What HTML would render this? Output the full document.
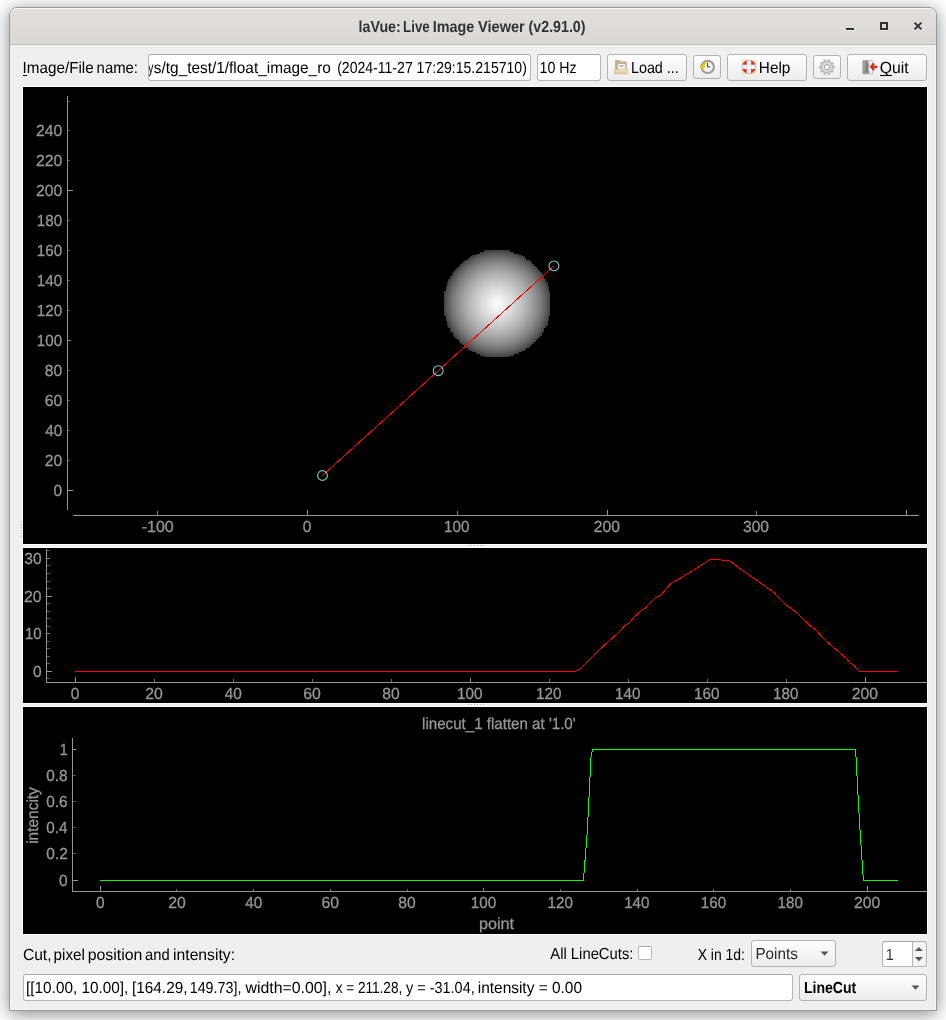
<!DOCTYPE html>
<html lang="en"><head><meta charset="utf-8"><title>laVue: Live Image Viewer (v2.91.0)</title>
<style>
html,body{margin:0;padding:0}
body{width:946px;height:1020px;position:relative;overflow:hidden;background:#fff}
#root{position:absolute;left:0;top:0;width:946px;height:1020px;will-change:transform;overflow:hidden;background:#fff;font-family:"Liberation Sans",sans-serif}
#root *{box-sizing:border-box}
#root>div,#root>svg{position:absolute}
#win{left:9px;top:7px;width:928px;height:1004px;border:1px solid #999;border-radius:8px 8px 0 0;background:#efefef;box-shadow:0 3px 18px rgba(0,0,0,.47),inset 0 0 0 1px #f4f4f4}
#tb{left:10px;top:8px;width:926px;height:37px;border-radius:7px 7px 0 0;background:linear-gradient(#e3dfdc,#dbd7d3);border-top:1px solid #f9f9f8;border-bottom:1px solid #c3bdb7}
.pl{background:#000;border:1px solid #fff;border-radius:1px}
.sp{background:#fff}
.in{background:#fff;border:1px solid #b6b6b6;border-top-color:#a8a8a8;border-radius:3px}
.bt{border:1px solid #b2b2b2;border-radius:3px;background:linear-gradient(#fefefe,#ececec)}
#ov{left:0;top:0;font-family:"Liberation Sans",sans-serif;text-rendering:geometricPrecision}
</style></head>
<body><div id="root">
<div id="win"></div><div id="tb"></div>
<div class="pl" style="left:22px;top:86px;width:906px;height:459px;"></div>
<div class="pl" style="left:22px;top:547px;width:906px;height:157px;"></div>
<div class="pl" style="left:22px;top:706px;width:906px;height:229px;"></div>
<div class="in" style="left:148px;top:54px;width:383px;height:27px;"></div>
<div class="in" style="left:537px;top:54px;width:64px;height:27px;"></div>
<div class="bt" style="left:607px;top:54px;width:80px;height:27px;"></div>
<div class="bt" style="left:693px;top:55px;width:28px;height:24px;"></div>
<div class="bt" style="left:727px;top:54px;width:80px;height:27px;"></div>
<div class="bt" style="left:813px;top:55px;width:28px;height:24px;"></div>
<div class="bt" style="left:847px;top:54px;width:80px;height:27px;"></div>
<div class="in" style="left:638px;top:946px;width:14px;height:14px;border-radius:2px"></div>
<div class="bt" style="left:751px;top:940px;width:85px;height:27px;"></div>
<div class="in" style="left:882px;top:941px;width:45px;height:26px;background:linear-gradient(90deg,#fff 30px,#f4f4f4 30px)"></div>
<div class="in" style="left:23px;top:974px;width:770px;height:27px;"></div>
<div class="bt" style="left:799px;top:974px;width:128px;height:27px;"></div>
<svg id="ov" width="946" height="1020" viewBox="0 0 946 1020">
<rect x="468" y="545" width="1" height="1" fill="#b4b4b4"/><rect x="469" y="546" width="1" height="1" fill="#fbfbfb"/>
<rect x="468" y="704" width="1" height="1" fill="#b4b4b4"/><rect x="469" y="705" width="1" height="1" fill="#fbfbfb"/>
<rect x="471" y="545" width="1" height="1" fill="#b4b4b4"/><rect x="472" y="546" width="1" height="1" fill="#fbfbfb"/>
<rect x="471" y="704" width="1" height="1" fill="#b4b4b4"/><rect x="472" y="705" width="1" height="1" fill="#fbfbfb"/>
<rect x="474" y="545" width="1" height="1" fill="#b4b4b4"/><rect x="475" y="546" width="1" height="1" fill="#fbfbfb"/>
<rect x="474" y="704" width="1" height="1" fill="#b4b4b4"/><rect x="475" y="705" width="1" height="1" fill="#fbfbfb"/>
<rect x="477" y="545" width="1" height="1" fill="#b4b4b4"/><rect x="478" y="546" width="1" height="1" fill="#fbfbfb"/>
<rect x="477" y="704" width="1" height="1" fill="#b4b4b4"/><rect x="478" y="705" width="1" height="1" fill="#fbfbfb"/>
<rect x="480" y="545" width="1" height="1" fill="#b4b4b4"/><rect x="481" y="546" width="1" height="1" fill="#fbfbfb"/>
<rect x="480" y="704" width="1" height="1" fill="#b4b4b4"/><rect x="481" y="705" width="1" height="1" fill="#fbfbfb"/>
<rect x="483" y="545" width="1" height="1" fill="#b4b4b4"/><rect x="484" y="546" width="1" height="1" fill="#fbfbfb"/>
<rect x="483" y="704" width="1" height="1" fill="#b4b4b4"/><rect x="484" y="705" width="1" height="1" fill="#fbfbfb"/>
<rect x="21" y="521" width="1" height="1" fill="#b4b4b4"/>
<rect x="21" y="524" width="1" height="1" fill="#b4b4b4"/>
<rect x="21" y="527" width="1" height="1" fill="#b4b4b4"/>
<rect x="21" y="530" width="1" height="1" fill="#b4b4b4"/>
<rect x="21" y="533" width="1" height="1" fill="#b4b4b4"/>
<rect x="21" y="536" width="1" height="1" fill="#b4b4b4"/>
<text y="32" font-size="16" font-weight="bold" fill="#2e3436" xml:space="preserve"><tspan x="358.62" textLength="46.03" lengthAdjust="spacingAndGlyphs">laVue: </tspan><tspan x="403.11" textLength="30.23" lengthAdjust="spacingAndGlyphs">Live </tspan><tspan x="432.74" textLength="45.55" lengthAdjust="spacingAndGlyphs">Image </tspan><tspan x="478.00" textLength="50.85" lengthAdjust="spacingAndGlyphs">Viewer </tspan><tspan x="528.59" textLength="56.92" lengthAdjust="spacingAndGlyphs">(v2.91.0)</tspan></text>
<g fill="none" stroke="#fff" stroke-opacity="0.55"><path d="M846 30.500h8M881 30.500h6M914.5 30.500h1.800M919.700 30.500h1.800" stroke-width="1"/></g>
<rect x="846" y="28" width="8" height="2" fill="#2e3436"/><rect x="881" y="23" width="6" height="6" fill="none" stroke="#2e3436" stroke-width="2"/><path d="M914.6 22.6l6.8 6.8m0-6.8l-6.8 6.8" stroke="#2e3436" stroke-width="2" fill="none"/>
<text y="73" font-size="16" fill="#000" xml:space="preserve"><tspan x="22.59" textLength="75.31" lengthAdjust="spacingAndGlyphs">Image/File </tspan><tspan x="96.61" textLength="41.35" lengthAdjust="spacingAndGlyphs">name:</tspan></text>
<rect x="23" y="75" width="4" height="1" fill="#000"/>
<svg x="149" y="55" width="381" height="25" viewBox="149 55 381 25">
<text y="73" font-size="16" fill="#000" xml:space="preserve"><tspan x="147.97" textLength="5.45" lengthAdjust="spacingAndGlyphs">y</tspan><tspan x="153.87" textLength="185.52" lengthAdjust="spacingAndGlyphs">s/tg_test/1/float_image_ro  </tspan><tspan x="337.13" textLength="189.73" lengthAdjust="spacingAndGlyphs">(2024-11-27 17:29:15.215710)</tspan></text>
</svg>
<text transform="translate(539.52 73) scale(0.8899 1)" font-size="16" fill="#000" xml:space="preserve">10 Hz</text>
<text transform="translate(630.92 73) scale(0.8972 1)" font-size="16" fill="#000" xml:space="preserve">Load ...</text>
<text transform="translate(758.84 73) scale(0.9573 1)" font-size="16" fill="#000" xml:space="preserve">Help</text>
<text transform="translate(879.75 73) scale(0.9835 1)" font-size="16" fill="#000" xml:space="preserve">Quit</text>
<rect x="880" y="75" width="12" height="1" fill="#000"/>
<text y="960" font-size="16" fill="#000" xml:space="preserve"><tspan x="22.91" textLength="32.92" lengthAdjust="spacingAndGlyphs">Cut, </tspan><tspan x="53.52" textLength="35.65" lengthAdjust="spacingAndGlyphs">pixel </tspan><tspan x="87.68" textLength="59.06" lengthAdjust="spacingAndGlyphs">position </tspan><tspan x="145.07" textLength="28.67" lengthAdjust="spacingAndGlyphs">and </tspan><tspan x="173.05" textLength="61.98" lengthAdjust="spacingAndGlyphs">intensity:</tspan></text>
<text transform="translate(550.27 959) scale(0.9261 1)" font-size="16" fill="#000" xml:space="preserve">All LineCuts:</text>
<text transform="translate(697.69 960) scale(0.8715 1)" font-size="16" fill="#000" xml:space="preserve">X in 1d:</text>
<text transform="translate(755.45 959) scale(0.9512 1)" font-size="16" fill="#2a2a2a" xml:space="preserve">Points</text>
<text transform="translate(885.70 960) scale(0.8988 1)" font-size="16" fill="#333" xml:space="preserve">1</text>
<text y="993" font-size="16" fill="#000" xml:space="preserve"><tspan x="26.11" textLength="106.32" lengthAdjust="spacingAndGlyphs">[[10.00, 10.00], </tspan><tspan x="132.01" textLength="59.74" lengthAdjust="spacingAndGlyphs">[164.29, </tspan><tspan x="189.71" textLength="55.65" lengthAdjust="spacingAndGlyphs">149.73], </tspan><tspan x="245.52" textLength="90.30" lengthAdjust="spacingAndGlyphs">width=0.00], </tspan><tspan x="335.65" textLength="70.38" lengthAdjust="spacingAndGlyphs">x = 211.28, </tspan><tspan x="406.06" textLength="72.64" lengthAdjust="spacingAndGlyphs">y = -31.04, </tspan><tspan x="477.77" textLength="104.24" lengthAdjust="spacingAndGlyphs">intensity = 0.00</tspan></text>
<text transform="translate(803.96 993) scale(0.8785 1)" font-size="16" font-weight="bold" fill="#000" xml:space="preserve">LineCut</text>
<path d="M820.5 951.4h8l-4 4.400z" fill="#555"/>
<path d="M911.5 985.4h8l-4 4.300z" fill="#555"/>
<rect x="912" y="942" width="1" height="24" fill="#b6b6b6"/>
<path d="M914.9 951.100h8l-4-4.000z" fill="#555"/><path d="M914.9 957.100h8l-4 4.100z" fill="#555"/>
<rect x="67" y="96" width="1" height="414" fill="#969696"/>
<rect x="73" y="515" width="846" height="1" fill="#969696"/>
<rect x="68" y="490" width="5" height="1" fill="#969696"/>
<text transform="translate(53.60 496) scale(0.9675 1)" font-size="16" fill="#969696" xml:space="preserve" stroke="#969696" stroke-width="0.3">0</text>
<rect x="68" y="460" width="2" height="1" fill="#969696" fill-opacity="0.6"/>
<text transform="translate(44.71 466) scale(0.9837 1)" font-size="16" fill="#969696" xml:space="preserve" stroke="#969696" stroke-width="0.3">20</text>
<rect x="68" y="430" width="2" height="1" fill="#969696" fill-opacity="0.6"/>
<text transform="translate(45.15 436) scale(0.9581 1)" font-size="16" fill="#969696" xml:space="preserve" stroke="#969696" stroke-width="0.3">40</text>
<rect x="68" y="400" width="2" height="1" fill="#969696" fill-opacity="0.6"/>
<text transform="translate(44.70 406) scale(0.9841 1)" font-size="16" fill="#969696" xml:space="preserve" stroke="#969696" stroke-width="0.3">60</text>
<rect x="68" y="370" width="2" height="1" fill="#969696" fill-opacity="0.6"/>
<text transform="translate(44.82 376) scale(0.9771 1)" font-size="16" fill="#969696" xml:space="preserve" stroke="#969696" stroke-width="0.3">80</text>
<rect x="68" y="340" width="3" height="1" fill="#969696" fill-opacity="0.9"/>
<text transform="translate(36.84 346) scale(0.9496 1)" font-size="16" fill="#969696" xml:space="preserve" stroke="#969696" stroke-width="0.3">100</text>
<rect x="68" y="310" width="2" height="1" fill="#969696" fill-opacity="0.6"/>
<text transform="translate(36.84 316) scale(0.9496 1)" font-size="16" fill="#969696" xml:space="preserve" stroke="#969696" stroke-width="0.3">120</text>
<rect x="68" y="280" width="2" height="1" fill="#969696" fill-opacity="0.6"/>
<text transform="translate(36.84 286) scale(0.9496 1)" font-size="16" fill="#969696" xml:space="preserve" stroke="#969696" stroke-width="0.3">140</text>
<rect x="68" y="250" width="2" height="1" fill="#969696" fill-opacity="0.6"/>
<text transform="translate(36.84 256) scale(0.9496 1)" font-size="16" fill="#969696" xml:space="preserve" stroke="#969696" stroke-width="0.3">160</text>
<rect x="68" y="220" width="2" height="1" fill="#969696" fill-opacity="0.6"/>
<text transform="translate(36.84 226) scale(0.9496 1)" font-size="16" fill="#969696" xml:space="preserve" stroke="#969696" stroke-width="0.3">180</text>
<rect x="68" y="190" width="5" height="1" fill="#969696"/>
<text transform="translate(36.01 196) scale(0.9816 1)" font-size="16" fill="#969696" xml:space="preserve" stroke="#969696" stroke-width="0.3">200</text>
<rect x="68" y="160" width="2" height="1" fill="#969696" fill-opacity="0.6"/>
<text transform="translate(36.01 166) scale(0.9816 1)" font-size="16" fill="#969696" xml:space="preserve" stroke="#969696" stroke-width="0.3">220</text>
<rect x="68" y="130" width="2" height="1" fill="#969696" fill-opacity="0.6"/>
<text transform="translate(36.01 136) scale(0.9816 1)" font-size="16" fill="#969696" xml:space="preserve" stroke="#969696" stroke-width="0.3">240</text>
<rect x="68" y="101" width="2" height="1" fill="#969696" fill-opacity="0.6"/>
<rect x="157" y="511" width="1" height="4" fill="#969696" fill-opacity="0.85"/>
<text transform="translate(141.69 532) scale(1.0004 1)" font-size="16" fill="#969696" xml:space="preserve" stroke="#969696" stroke-width="0.3">-100</text>
<rect x="307" y="510" width="1" height="5" fill="#969696"/>
<text transform="translate(302.70 532) scale(0.9675 1)" font-size="16" fill="#969696" xml:space="preserve" stroke="#969696" stroke-width="0.3">0</text>
<rect x="457" y="511" width="1" height="4" fill="#969696" fill-opacity="0.85"/>
<text transform="translate(444.04 532) scale(0.9496 1)" font-size="16" fill="#969696" xml:space="preserve" stroke="#969696" stroke-width="0.3">100</text>
<rect x="607" y="510" width="1" height="5" fill="#969696"/>
<text transform="translate(593.81 532) scale(0.9816 1)" font-size="16" fill="#969696" xml:space="preserve" stroke="#969696" stroke-width="0.3">200</text>
<rect x="756" y="511" width="1" height="4" fill="#969696" fill-opacity="0.85"/>
<text transform="translate(743.01 532) scale(0.9740 1)" font-size="16" fill="#969696" xml:space="preserve" stroke="#969696" stroke-width="0.3">300</text>
<rect x="906" y="510" width="1" height="5" fill="#969696"/>
<defs><radialGradient id="cg" gradientUnits="userSpaceOnUse" cx="497.25" cy="303.75" r="57"><stop offset="0.0000" stop-color="rgb(255,255,255)"/><stop offset="0.0417" stop-color="rgb(250,250,250)"/><stop offset="0.0833" stop-color="rgb(244,244,244)"/><stop offset="0.1250" stop-color="rgb(239,239,239)"/><stop offset="0.1667" stop-color="rgb(233,233,233)"/><stop offset="0.2083" stop-color="rgb(227,227,227)"/><stop offset="0.2500" stop-color="rgb(221,221,221)"/><stop offset="0.2917" stop-color="rgb(215,215,215)"/><stop offset="0.3333" stop-color="rgb(208,208,208)"/><stop offset="0.3750" stop-color="rgb(202,202,202)"/><stop offset="0.4167" stop-color="rgb(195,195,195)"/><stop offset="0.4583" stop-color="rgb(188,188,188)"/><stop offset="0.5000" stop-color="rgb(180,180,180)"/><stop offset="0.5417" stop-color="rgb(173,173,173)"/><stop offset="0.5833" stop-color="rgb(165,165,165)"/><stop offset="0.6250" stop-color="rgb(156,156,156)"/><stop offset="0.6667" stop-color="rgb(147,147,147)"/><stop offset="0.7083" stop-color="rgb(138,138,138)"/><stop offset="0.7500" stop-color="rgb(128,128,128)"/><stop offset="0.7917" stop-color="rgb(116,116,116)"/><stop offset="0.8333" stop-color="rgb(104,104,104)"/><stop offset="0.8750" stop-color="rgb(90,90,90)"/><stop offset="0.9167" stop-color="rgb(74,74,74)"/><stop offset="0.9583" stop-color="rgb(52,52,52)"/><stop offset="1.0000" stop-color="rgb(0,0,0)"/></radialGradient></defs>
<path d="M484 356H510V357H484ZM480 354H514V356H480ZM476 352H519V354H476ZM472 351H522V352H472ZM470 350H525V351H470ZM468 348H526V350H468ZM465 346H530V348H465ZM464 345H531V346H464ZM462 344H532V345H462ZM460 342H534V344H460ZM459 340H536V342H459ZM458 339H537V340H458ZM456 338H538V339H456ZM454 336H540V338H454ZM453 334H542V336H453ZM453 333H542V334H453ZM452 332H543V333H452ZM450 330H544V332H450ZM450 328H544V330H450ZM448 327H546V328H448ZM448 326H546V327H448ZM447 324H548V326H447ZM447 322H548V324H447ZM447 321H548V322H447ZM446 320H549V321H446ZM446 318H549V320H446ZM446 316H549V318H446ZM444 315H550V316H444ZM444 314H550V315H444ZM444 312H550V314H444ZM444 310H550V312H444ZM444 309H550V310H444ZM444 308H550V309H444ZM444 306H550V308H444ZM444 304H550V306H444ZM444 303H550V304H444ZM444 302H550V303H444ZM444 300H550V302H444ZM444 298H550V300H444ZM444 297H550V298H444ZM444 296H550V297H444ZM444 294H550V296H444ZM444 292H550V294H444ZM444 291H550V292H444ZM446 290H549V291H446ZM446 288H549V290H446ZM446 286H549V288H446ZM447 285H548V286H447ZM447 284H548V285H447ZM447 282H548V284H447ZM448 280H546V282H448ZM448 279H546V280H448ZM450 278H544V279H450ZM450 276H544V278H450ZM452 274H543V276H452ZM453 273H542V274H453ZM453 272H542V273H453ZM454 270H540V272H454ZM456 268H538V270H456ZM458 267H537V268H458ZM459 266H536V267H459ZM460 264H534V266H460ZM462 262H532V264H462ZM464 261H531V262H464ZM465 260H530V261H465ZM468 258H526V260H468ZM470 256H525V258H470ZM472 255H522V256H472ZM476 254H519V255H476ZM480 252H514V254H480ZM484 250H510V252H484Z" fill="url(#cg)" shape-rendering="crispEdges"/>
<line x1="322.50" y1="475.50" x2="553.93" y2="265.91" stroke="#ff0000" stroke-width="1" shape-rendering="crispEdges"/>
<circle cx="322.50" cy="475.50" r="4.9" fill="none" stroke="#96ffff" stroke-opacity="0.8" stroke-width="1.1"/>
<circle cx="438.22" cy="370.70" r="4.9" fill="none" stroke="#96ffff" stroke-opacity="0.8" stroke-width="1.1"/>
<circle cx="553.93" cy="265.91" r="4.9" fill="none" stroke="#96ffff" stroke-opacity="0.8" stroke-width="1.1"/>
<rect x="46" y="549" width="1" height="134" fill="#969696"/>
<rect x="46" y="682" width="881" height="1" fill="#969696"/>
<rect x="75" y="677" width="1" height="5" fill="#969696"/>
<text transform="translate(70.75 699) scale(0.9675 1)" font-size="16" fill="#969696" xml:space="preserve" stroke="#969696" stroke-width="0.3">0</text>
<rect x="154" y="679" width="1" height="3" fill="#969696" fill-opacity="0.7"/>
<text transform="translate(145.21 699) scale(0.9837 1)" font-size="16" fill="#969696" xml:space="preserve" stroke="#969696" stroke-width="0.3">20</text>
<rect x="233" y="679" width="1" height="3" fill="#969696" fill-opacity="0.7"/>
<text transform="translate(224.65 699) scale(0.9581 1)" font-size="16" fill="#969696" xml:space="preserve" stroke="#969696" stroke-width="0.3">40</text>
<rect x="312" y="679" width="1" height="3" fill="#969696" fill-opacity="0.7"/>
<text transform="translate(303.20 699) scale(0.9841 1)" font-size="16" fill="#969696" xml:space="preserve" stroke="#969696" stroke-width="0.3">60</text>
<rect x="391" y="679" width="1" height="3" fill="#969696" fill-opacity="0.7"/>
<text transform="translate(382.32 699) scale(0.9771 1)" font-size="16" fill="#969696" xml:space="preserve" stroke="#969696" stroke-width="0.3">80</text>
<rect x="470" y="678" width="1" height="4" fill="#969696" fill-opacity="0.9"/>
<text transform="translate(457.09 699) scale(0.9496 1)" font-size="16" fill="#969696" xml:space="preserve" stroke="#969696" stroke-width="0.3">100</text>
<rect x="549" y="679" width="1" height="3" fill="#969696" fill-opacity="0.7"/>
<text transform="translate(536.09 699) scale(0.9496 1)" font-size="16" fill="#969696" xml:space="preserve" stroke="#969696" stroke-width="0.3">120</text>
<rect x="628" y="679" width="1" height="3" fill="#969696" fill-opacity="0.7"/>
<text transform="translate(615.09 699) scale(0.9496 1)" font-size="16" fill="#969696" xml:space="preserve" stroke="#969696" stroke-width="0.3">140</text>
<rect x="707" y="679" width="1" height="3" fill="#969696" fill-opacity="0.7"/>
<text transform="translate(694.09 699) scale(0.9496 1)" font-size="16" fill="#969696" xml:space="preserve" stroke="#969696" stroke-width="0.3">160</text>
<rect x="786" y="679" width="1" height="3" fill="#969696" fill-opacity="0.7"/>
<text transform="translate(773.09 699) scale(0.9496 1)" font-size="16" fill="#969696" xml:space="preserve" stroke="#969696" stroke-width="0.3">180</text>
<rect x="865" y="677" width="1" height="5" fill="#969696"/>
<text transform="translate(851.86 699) scale(0.9816 1)" font-size="16" fill="#969696" xml:space="preserve" stroke="#969696" stroke-width="0.3">200</text>
<rect x="47" y="678" width="3" height="1" fill="#969696" fill-opacity="0.6"/>
<rect x="47" y="671" width="5" height="1" fill="#969696"/>
<text transform="translate(33.00 677) scale(0.9675 1)" font-size="16" fill="#969696" xml:space="preserve" stroke="#969696" stroke-width="0.3">0</text>
<rect x="47" y="663" width="3" height="1" fill="#969696" fill-opacity="0.6"/>
<rect x="47" y="656" width="3" height="1" fill="#969696" fill-opacity="0.6"/>
<rect x="47" y="648" width="3" height="1" fill="#969696" fill-opacity="0.6"/>
<rect x="47" y="641" width="3" height="1" fill="#969696" fill-opacity="0.6"/>
<rect x="47" y="633" width="3" height="1" fill="#969696" fill-opacity="0.85"/>
<text transform="translate(24.96 639) scale(0.9340 1)" font-size="16" fill="#969696" xml:space="preserve" stroke="#969696" stroke-width="0.3">10</text>
<rect x="47" y="626" width="3" height="1" fill="#969696" fill-opacity="0.6"/>
<rect x="47" y="618" width="3" height="1" fill="#969696" fill-opacity="0.6"/>
<rect x="47" y="611" width="3" height="1" fill="#969696" fill-opacity="0.6"/>
<rect x="47" y="603" width="3" height="1" fill="#969696" fill-opacity="0.6"/>
<rect x="47" y="596" width="5" height="1" fill="#969696"/>
<text transform="translate(24.11 602) scale(0.9837 1)" font-size="16" fill="#969696" xml:space="preserve" stroke="#969696" stroke-width="0.3">20</text>
<rect x="47" y="588" width="3" height="1" fill="#969696" fill-opacity="0.6"/>
<rect x="47" y="581" width="3" height="1" fill="#969696" fill-opacity="0.6"/>
<rect x="47" y="573" width="3" height="1" fill="#969696" fill-opacity="0.6"/>
<rect x="47" y="565" width="3" height="1" fill="#969696" fill-opacity="0.6"/>
<rect x="47" y="558" width="3" height="1" fill="#969696" fill-opacity="0.85"/>
<text transform="translate(24.31 564) scale(0.9721 1)" font-size="16" fill="#969696" xml:space="preserve" stroke="#969696" stroke-width="0.3">30</text>
<rect x="47" y="550" width="3" height="1" fill="#969696" fill-opacity="0.6"/>
<polyline points="75,671.5 574.9,671.5 579.45,669.4 592.1,657.1 599.7,649.5 609,641 620,631.2 625.1,625 629.3,622.9 634.4,616.8 642,610.1 645.4,608 654.7,598.2 661.1,594.85 669.9,584.4 685.2,575.1 695.3,569.1 710.1,559.5 720.3,559.5 722,560.3 728.75,560.3 740.6,569.1 754.1,578.4 774.4,592.8 777.8,597 784.6,603.8 796.4,612.3 809.9,625.5 816.7,630.5 821.8,636.8 825.2,640.2 837,650.3 847.1,659.1 849.7,662.7 853.6,664.6 855.5,667.3 858.4,670.7 860.4,671.5 897.9,671.5" fill="none" stroke="#ff0000" stroke-width="1" shape-rendering="crispEdges"/>
<rect x="72" y="738" width="1" height="154" fill="#969696"/>
<rect x="72" y="891" width="855" height="1" fill="#969696"/>
<rect x="100" y="886" width="1" height="5" fill="#969696"/>
<text transform="translate(96.00 908) scale(0.9675 1)" font-size="16" fill="#969696" xml:space="preserve" stroke="#969696" stroke-width="0.3">0</text>
<rect x="176" y="889" width="1" height="2" fill="#969696" fill-opacity="0.7"/>
<text transform="translate(168.15 908) scale(0.9837 1)" font-size="16" fill="#969696" xml:space="preserve" stroke="#969696" stroke-width="0.3">20</text>
<rect x="253" y="889" width="1" height="2" fill="#969696" fill-opacity="0.7"/>
<text transform="translate(245.28 908) scale(0.9581 1)" font-size="16" fill="#969696" xml:space="preserve" stroke="#969696" stroke-width="0.3">40</text>
<rect x="330" y="889" width="1" height="2" fill="#969696" fill-opacity="0.7"/>
<text transform="translate(321.52 908) scale(0.9841 1)" font-size="16" fill="#969696" xml:space="preserve" stroke="#969696" stroke-width="0.3">60</text>
<rect x="407" y="889" width="1" height="2" fill="#969696" fill-opacity="0.7"/>
<text transform="translate(398.33 908) scale(0.9771 1)" font-size="16" fill="#969696" xml:space="preserve" stroke="#969696" stroke-width="0.3">80</text>
<rect x="483" y="888" width="1" height="3" fill="#969696" fill-opacity="0.9"/>
<text transform="translate(470.79 908) scale(0.9496 1)" font-size="16" fill="#969696" xml:space="preserve" stroke="#969696" stroke-width="0.3">100</text>
<rect x="560" y="889" width="1" height="2" fill="#969696" fill-opacity="0.7"/>
<text transform="translate(547.48 908) scale(0.9496 1)" font-size="16" fill="#969696" xml:space="preserve" stroke="#969696" stroke-width="0.3">120</text>
<rect x="637" y="889" width="1" height="2" fill="#969696" fill-opacity="0.7"/>
<text transform="translate(624.17 908) scale(0.9496 1)" font-size="16" fill="#969696" xml:space="preserve" stroke="#969696" stroke-width="0.3">140</text>
<rect x="713" y="889" width="1" height="2" fill="#969696" fill-opacity="0.7"/>
<text transform="translate(700.86 908) scale(0.9496 1)" font-size="16" fill="#969696" xml:space="preserve" stroke="#969696" stroke-width="0.3">160</text>
<rect x="790" y="889" width="1" height="2" fill="#969696" fill-opacity="0.7"/>
<text transform="translate(777.55 908) scale(0.9496 1)" font-size="16" fill="#969696" xml:space="preserve" stroke="#969696" stroke-width="0.3">180</text>
<rect x="867" y="886" width="1" height="5" fill="#969696"/>
<text transform="translate(854.01 908) scale(0.9816 1)" font-size="16" fill="#969696" xml:space="preserve" stroke="#969696" stroke-width="0.3">200</text>
<rect x="73" y="880" width="5" height="1" fill="#969696"/>
<text transform="translate(59.00 886) scale(0.9675 1)" font-size="16" fill="#969696" xml:space="preserve" stroke="#969696" stroke-width="0.3">0</text>
<rect x="73" y="853" width="3" height="1" fill="#969696" fill-opacity="0.55"/>
<text transform="translate(46.30 859) scale(0.9658 1)" font-size="16" fill="#969696" xml:space="preserve" stroke="#969696" stroke-width="0.3">0.2</text>
<rect x="73" y="827" width="3" height="1" fill="#969696" fill-opacity="0.55"/>
<text transform="translate(46.31 833) scale(0.9504 1)" font-size="16" fill="#969696" xml:space="preserve" stroke="#969696" stroke-width="0.3">0.4</text>
<rect x="73" y="801" width="3" height="1" fill="#969696" fill-opacity="0.55"/>
<text transform="translate(46.30 807) scale(0.9611 1)" font-size="16" fill="#969696" xml:space="preserve" stroke="#969696" stroke-width="0.3">0.6</text>
<rect x="73" y="775" width="3" height="1" fill="#969696" fill-opacity="0.55"/>
<text transform="translate(46.30 781) scale(0.9607 1)" font-size="16" fill="#969696" xml:space="preserve" stroke="#969696" stroke-width="0.3">0.8</text>
<rect x="73" y="749" width="3" height="1" fill="#969696"/>
<text transform="translate(59.70 755) scale(0.8988 1)" font-size="16" fill="#969696" xml:space="preserve" stroke="#969696" stroke-width="0.3">1</text>
<text transform="translate(422.08 729) scale(0.9441 1)" font-size="16" fill="#969696" xml:space="preserve" stroke="#969696" stroke-width="0.3">linecut_1 flatten at '1.0'</text>
<text transform="translate(478.95 929) scale(1.0135 1)" font-size="16" fill="#969696" xml:space="preserve" stroke="#969696" stroke-width="0.3">point</text>
<text transform="translate(38.2 815) rotate(-90) scale(0.9660 1) translate(-29.87 0)" font-size="16" fill="#969696" xml:space="preserve" stroke="#969696" stroke-width="0.3">intencity</text>
<polyline points="100,880.5 583.45,880.5 587.3,831.5 591.1,755.4 592.6,749.5 855.6,749.5 859.5,822.2 863.4,880.5 897.9,880.5" fill="none" stroke="#00ff00" stroke-width="1" shape-rendering="crispEdges"/>
<defs><linearGradient id="ff" x1="0" y1="0" x2="0" y2="1"><stop offset="0" stop-color="#efe2cb"/><stop offset="1" stop-color="#e3c9a4"/></linearGradient><linearGradient id="dg" x1="0" y1="0" x2="1" y2="0"><stop offset="0" stop-color="#a9a9a7"/><stop offset="0.45" stop-color="#8a8a88"/><stop offset="0.62" stop-color="#c9c9c7"/><stop offset="0.7" stop-color="#f4f4f2"/><stop offset="1" stop-color="#e6e6e4"/></linearGradient><radialGradient id="clk" cx="0.5" cy="0.4" r="0.6"><stop offset="0" stop-color="#fff"/><stop offset="1" stop-color="#e9e9e6"/></radialGradient></defs>
<g><path d="M615.1 60.6q0-.5.5-.5h3.9q.4 0 .7.4l.9 1.1h5.2q.5 0 .5.5v7.6h-11.7z" fill="#c9b084"/><rect x="617.9" y="63.2" width="7.7" height="6" fill="#fff"/><path d="M617.9 63.2h7.7v.9h-7.7z" fill="#a3a39f"/><path d="M624.8 63.2h.8v6h-.8z" fill="#b0a99a"/><rect x="619" y="65" width="4.7" height="1.8" fill="#b9bab5"/><path d="M614.4 69.6h3.7l.8-.7h8.2q.7 0 .7.7v3.5q0 .8-.8.8h-11.9q-.8 0-.8-.8v-3q0-.5.1-.5z" fill="url(#ff)" stroke="#cdb48a" stroke-width="0.6"/></g>
<g><circle cx="707.7" cy="66.9" r="6.2" fill="url(#clk)" stroke="#9b9b99" stroke-width="2"/><path d="M707.6 62.700v4.200h2.600" fill="none" stroke="#333" stroke-width="1"/><path d="M699.5 66.300l3.200 3.100 2.900-3.200-1.500-.1q.3-1.900 2.200-2.800l-.7-1.600q-3.300 1.100-4.100 4.500z" fill="#eacb1c" stroke="#dcbb00" stroke-width="0.4"/></g>
<g><defs><clipPath id="lbc"><circle cx="748.9" cy="66.9" r="6.9"/></clipPath></defs><circle cx="753.50" cy="71.50" r="2.6" fill="#f8e2bc" stroke="#f2d09c" stroke-width="0.5"/><circle cx="744.30" cy="71.50" r="2.6" fill="#f8e2bc" stroke="#f2d09c" stroke-width="0.5"/><circle cx="744.30" cy="62.30" r="2.6" fill="#f8e2bc" stroke="#f2d09c" stroke-width="0.5"/><circle cx="753.50" cy="62.30" r="2.6" fill="#f8e2bc" stroke="#f2d09c" stroke-width="0.5"/><circle cx="748.9" cy="66.9" r="6.6" fill="#ea2a2e" stroke="#c21a1c" stroke-width="0.6"/><g clip-path="url(#lbc)"><rect x="746.7" y="59.9" width="4.4" height="14" fill="#f4f5f3"/><rect x="741.9" y="64.7" width="14" height="4.4" fill="#f4f5f3"/><rect x="746.7" y="59.9" width="4.4" height="0.9" fill="#b4b8b2"/><rect x="746.7" y="73.0" width="4.4" height="0.9" fill="#b4b8b2"/><rect x="741.9" y="64.7" width="0.9" height="4.4" fill="#b4b8b2"/><rect x="755.0" y="64.7" width="0.9" height="4.4" fill="#b4b8b2"/></g><circle cx="748.9" cy="66.9" r="2.5" fill="#fbfbfb" stroke="#d8dad6" stroke-width="0.8"/></g>
<g><path d="M828.29 59.83L830.05 60.40L829.69 62.02L830.87 62.87L832.29 62.03L833.38 63.54L832.15 64.63L832.60 66.01L834.24 66.17L834.24 68.03L832.60 68.19L832.15 69.57L833.38 70.66L832.29 72.17L830.87 71.33L829.69 72.18L830.05 73.80L828.29 74.37L827.63 72.85L826.17 72.85L825.51 74.37L823.75 73.80L824.11 72.18L822.93 71.33L821.51 72.17L820.42 70.66L821.65 69.57L821.20 68.19L819.56 68.03L819.56 66.17L821.20 66.01L821.65 64.63L820.42 63.54L821.51 62.03L822.93 62.87L824.11 62.02L823.75 60.40L825.51 59.83L826.17 61.35L827.63 61.35Z" fill="#c9c9c7" stroke="#a9aaa7" stroke-width="0.8" stroke-linejoin="round"/><circle cx="826.9" cy="67.1" r="4.4" fill="#dededc"/><circle cx="826.9" cy="67.1" r="2.6" fill="#fafafa" stroke="#a2a3a0" stroke-width="1"/></g>
<g><rect x="862.6" y="60.4" width="10" height="13.6" rx="0.8" fill="url(#dg)" stroke="#a2a3a0" stroke-width="0.6"/><path d="M866.5 61l3 4.500-1.200 3.200 1.600 4.500-4.800-1.000z" fill="#77777a" fill-opacity="0.55"/><path d="M870 66.800l3.300-3.700 1.200 1.000-1.600 1.800h4.100v1.800h-4.100l1.600 1.800-1.200 1.000z" fill="#e22a0a" stroke="#c81400" stroke-width="0.5" stroke-linejoin="round"/></g>
</svg>
</div></body></html>
